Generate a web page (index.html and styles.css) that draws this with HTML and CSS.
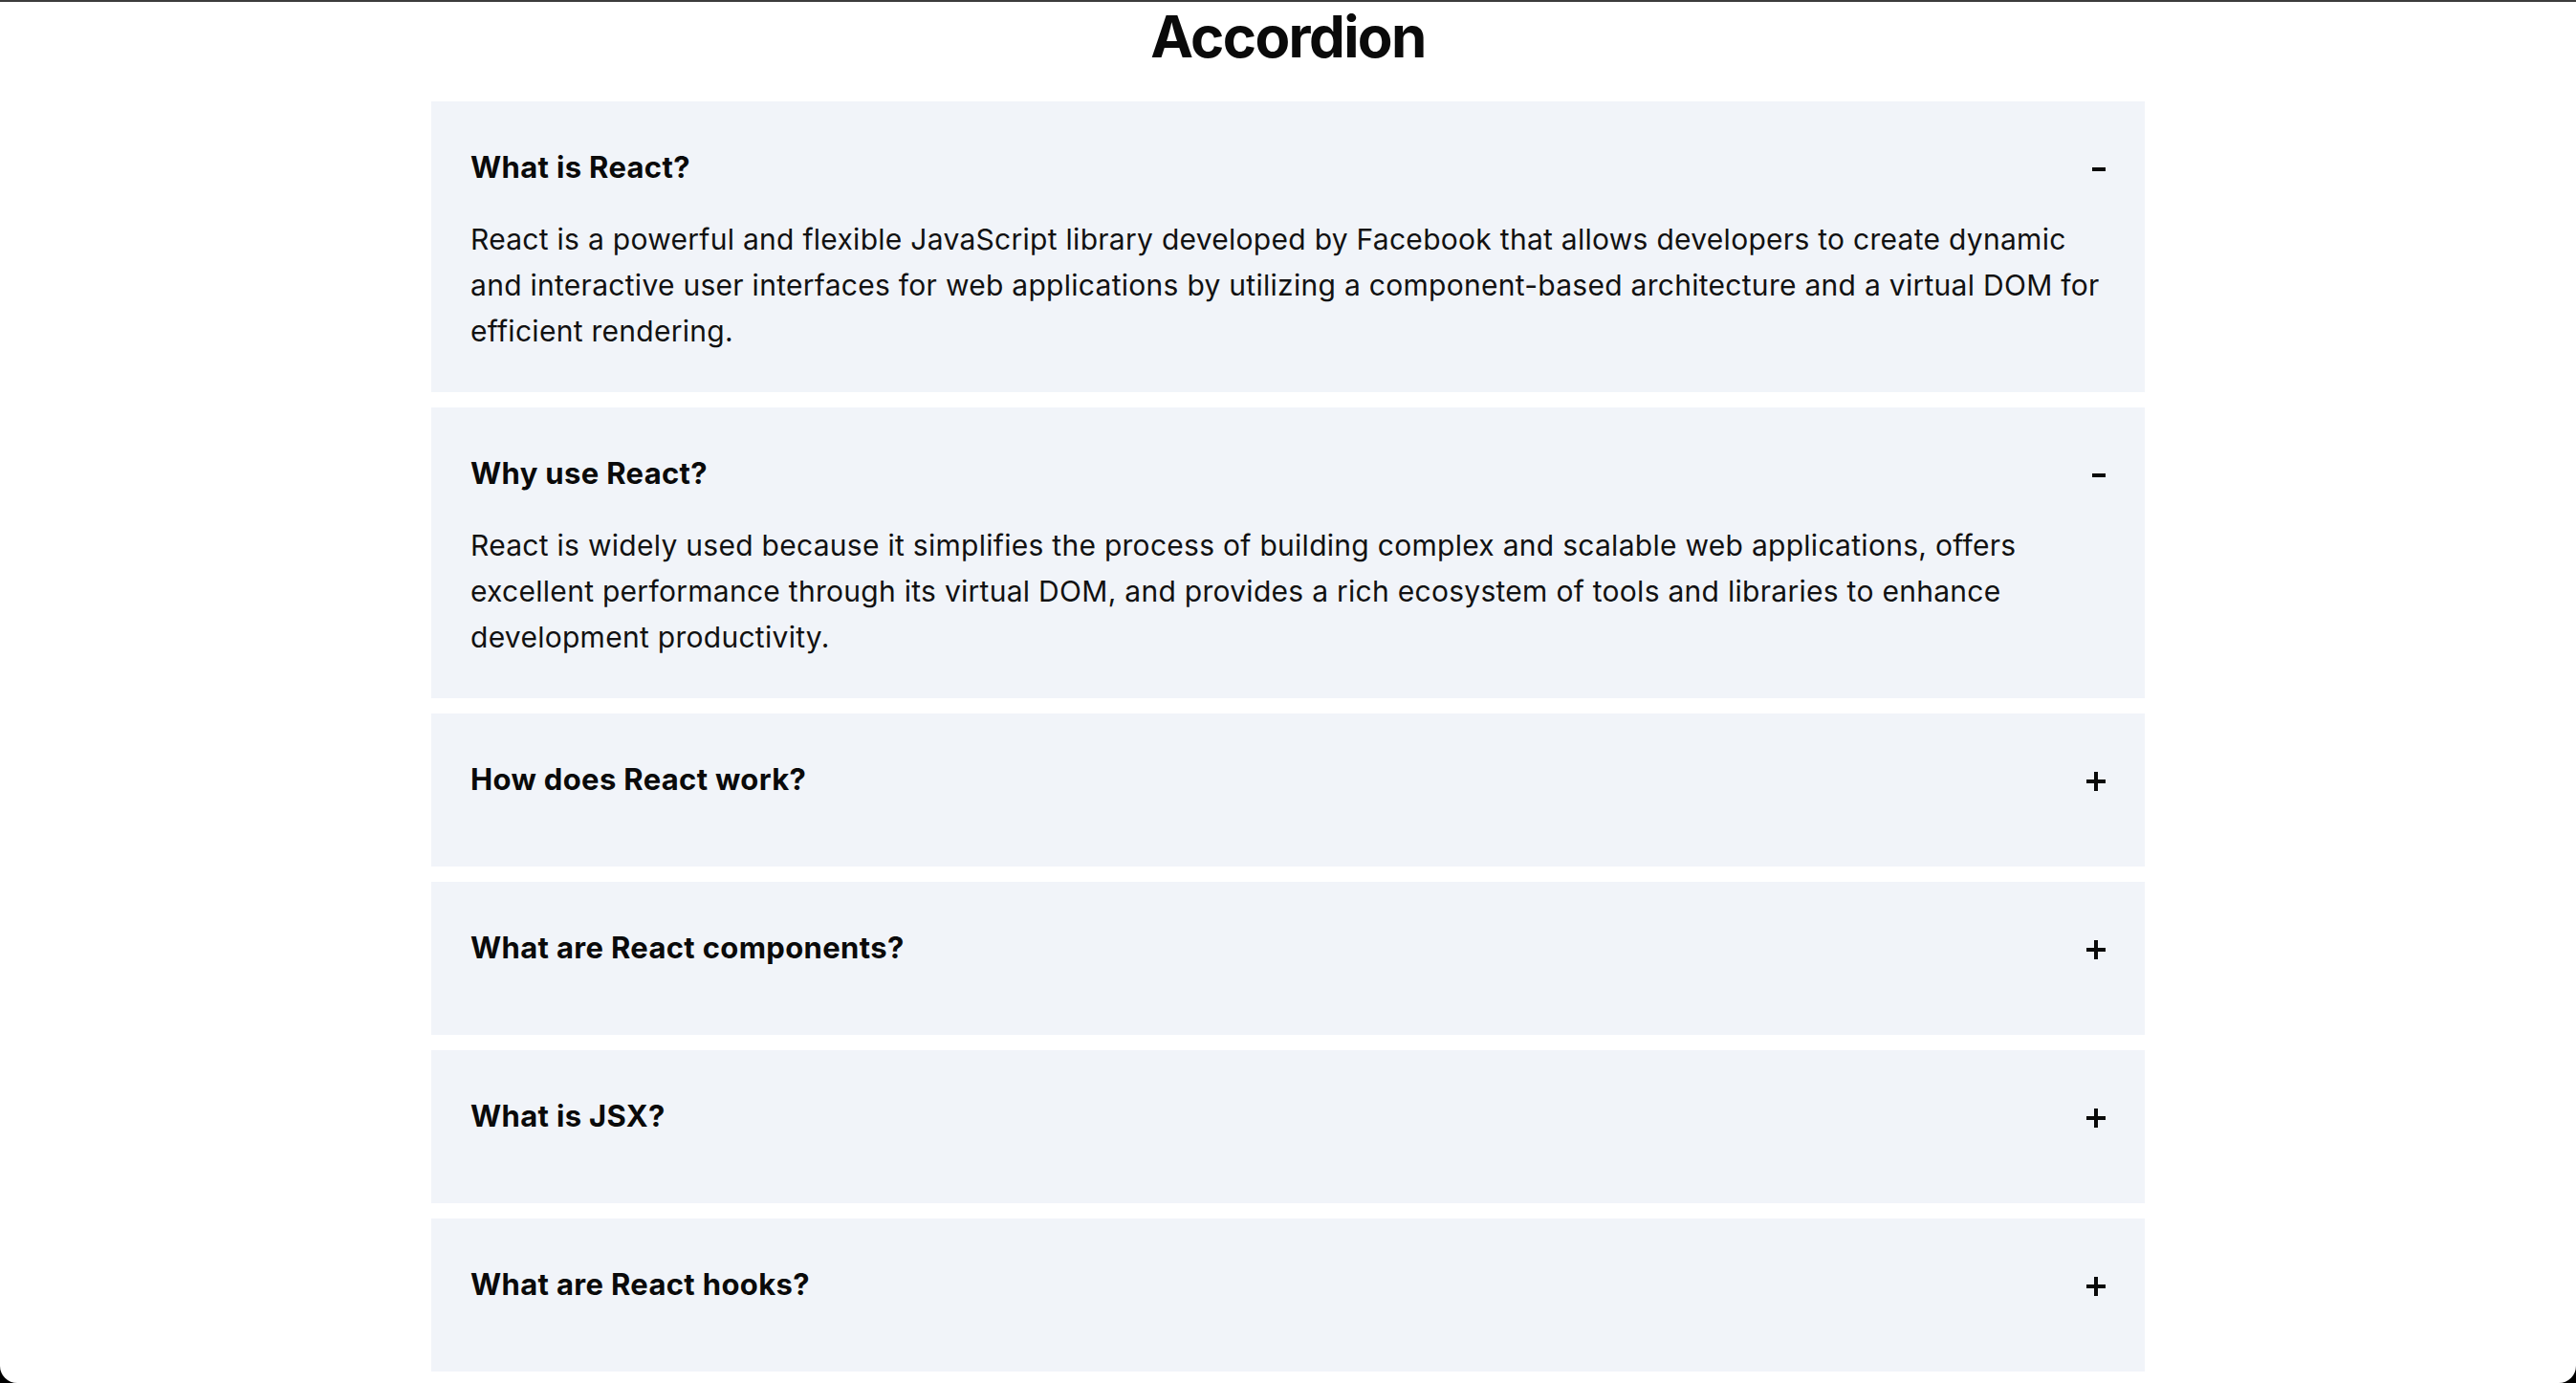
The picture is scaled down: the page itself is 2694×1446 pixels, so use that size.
FILE: index.html
```html
<!DOCTYPE html>
<html lang="en">
<head>
<meta charset="utf-8">
<title>Accordion</title>
<link rel="stylesheet" href="styles.css">
</head>
<body>
<div class="page">
  <h1 class="title">Accordion</h1>
  <div class="accordion">
    <div class="item">
      <div class="item-header">
        <h3 class="question">What is React?</h3>
        <svg class="icon icon-minus" width="14" height="4" viewBox="0 0 14 4"><rect x="0" y="0" width="14" height="4" fill="#0a0a0a"/></svg>
      </div>
      <p class="answer">React is a powerful and flexible JavaScript library developed by Facebook that allows developers to create dynamic and interactive user interfaces for web applications by utilizing a component-based architecture and a virtual DOM for efficient rendering.</p>
    </div>
    <div class="item">
      <div class="item-header">
        <h3 class="question">Why use React?</h3>
        <svg class="icon icon-minus" width="14" height="4" viewBox="0 0 14 4"><rect x="0" y="0" width="14" height="4" fill="#0a0a0a"/></svg>
      </div>
      <p class="answer">React is widely used because it simplifies the process of building complex and scalable web applications, offers excellent performance through its virtual DOM, and provides a rich ecosystem of tools and libraries to enhance development productivity.</p>
    </div>
    <div class="item">
      <div class="item-header">
        <h3 class="question">How does React work?</h3>
        <svg class="icon icon-plus" width="20" height="20" viewBox="0 0 20 20"><rect x="0" y="8" width="20" height="4" fill="#0a0a0a"/><rect x="8" y="0" width="4" height="20" fill="#0a0a0a"/></svg>
      </div>
    </div>
    <div class="item">
      <div class="item-header">
        <h3 class="question">What are React components?</h3>
        <svg class="icon icon-plus" width="20" height="20" viewBox="0 0 20 20"><rect x="0" y="8" width="20" height="4" fill="#0a0a0a"/><rect x="8" y="0" width="4" height="20" fill="#0a0a0a"/></svg>
      </div>
    </div>
    <div class="item">
      <div class="item-header">
        <h3 class="question">What is JSX?</h3>
        <svg class="icon icon-plus" width="20" height="20" viewBox="0 0 20 20"><rect x="0" y="8" width="20" height="4" fill="#0a0a0a"/><rect x="8" y="0" width="4" height="20" fill="#0a0a0a"/></svg>
      </div>
    </div>
    <div class="item">
      <div class="item-header">
        <h3 class="question">What are React hooks?</h3>
        <svg class="icon icon-plus" width="20" height="20" viewBox="0 0 20 20"><rect x="0" y="8" width="20" height="4" fill="#0a0a0a"/><rect x="8" y="0" width="4" height="20" fill="#0a0a0a"/></svg>
      </div>
    </div>
  </div>
</div>
</body>
</html>
```
FILE: styles.css
```css
html {
  background: #000;
  margin: 0;
  padding: 0;
}
body {
  margin: 0;
  height: 100vh;
  box-sizing: border-box;
  background: #fff;
  border-top: 2px solid #3c3c3c;
  border-radius: 0 0 18px 18px;
  overflow: hidden;
  font-family: Inter, "Liberation Sans", sans-serif;
  color: #0a0a0a;
}
.page {
  display: flex;
  flex-direction: column;
  align-items: center;
}
.title {
  margin: 0 0 32px;
  font-size: 60px;
  line-height: 72px;
  font-weight: 700;
  text-align: center;
  letter-spacing: -1.6px;
}
.accordion {
  width: 1792px;
  display: flex;
  flex-direction: column;
  gap: 16px;
}
.item {
  background: #f1f4f9;
  padding: 40px 41px;
}
.item-header {
  height: 58px;
  margin-bottom: 22px;
  display: flex;
  align-items: center;
  justify-content: space-between;
}
.question {
  margin: 0;
  font-size: 31px;
  font-weight: 700;
  line-height: 58px;
  letter-spacing: 0.35px;
}
.icon {
  display: block;
  margin-top: 4px;
}
.answer {
  margin: 0;
  font-size: 30px;
  line-height: 48px;
  letter-spacing: 0.28px;
  color: #111;
}
```
